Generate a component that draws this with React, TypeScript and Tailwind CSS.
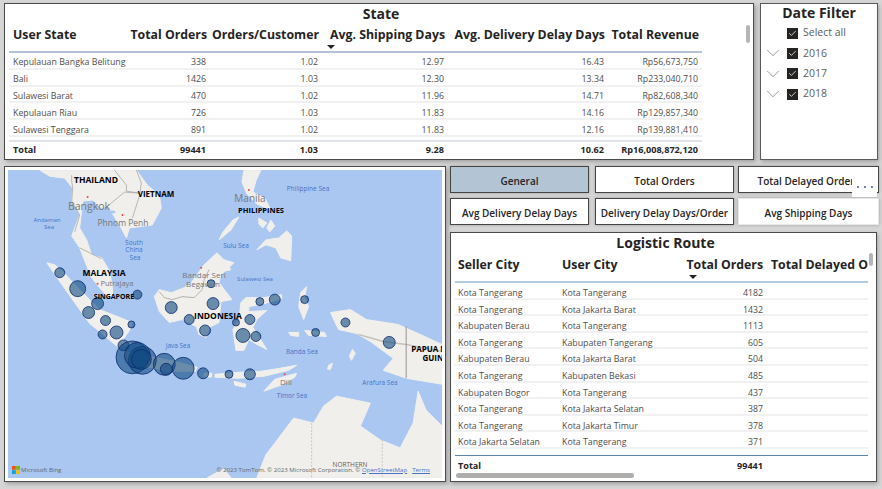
import React from 'react';
import { ChevronDown, Check } from 'lucide-react';

const stateRows = [
  ['Kepulauan Bangka Belitung', '338', '1.02', '12.97', '16.43', 'Rp56,673,750'],
  ['Bali', '1426', '1.03', '12.30', '13.34', 'Rp233,040,710'],
  ['Sulawesi Barat', '470', '1.02', '11.96', '14.71', 'Rp82,608,340'],
  ['Kepulauan Riau', '726', '1.03', '11.83', '14.16', 'Rp129,857,340'],
  ['Sulawesi Tenggara', '891', '1.02', '11.83', '12.16', 'Rp139,881,410'],
];

const routeRows = [
  ['Kota Tangerang', 'Kota Tangerang', '4182'],
  ['Kota Tangerang', 'Kota Jakarta Barat', '1432'],
  ['Kabupaten Berau', 'Kota Tangerang', '1113'],
  ['Kota Tangerang', 'Kabupaten Tangerang', '605'],
  ['Kabupaten Berau', 'Kota Jakarta Barat', '504'],
  ['Kota Tangerang', 'Kabupaten Bekasi', '485'],
  ['Kabupaten Bogor', 'Kota Tangerang', '437'],
  ['Kota Tangerang', 'Kota Jakarta Selatan', '387'],
  ['Kota Tangerang', 'Kota Jakarta Timur', '378'],
  ['Kota Jakarta Selatan', 'Kota Tangerang', '371'],
  ['Kota Tangerang', 'Kota Jakarta Utara', '334'],
];

const bubbles = [
  [60, 273, 5], [78, 289, 8], [98, 304, 6], [89, 313, 6], [106, 321, 5], [138, 295, 4.5],
  [132, 325, 3.5], [172, 308, 6], [214, 304, 6], [212, 284, 4], [190, 320, 5], [261, 302, 4],
  [276, 300, 5.5], [306, 300, 4], [251, 320, 5], [237, 323, 3.5], [347, 323, 4.5], [103, 335, 4.5],
  [117, 333, 6.5], [206, 331, 5.5], [124, 346, 5.5], [133, 358, 16.5], [143, 361, 14],
  [138, 356, 13], [142, 360, 10], [165, 365, 11], [167, 370, 6], [184, 369, 11], [204, 374, 5.5],
  [244, 336, 7], [257, 337, 5], [230, 375, 4], [251, 375, 5.5], [317, 333, 4], [391, 343, 6],
];

const land = [
  // indochina and malay peninsula
  '40,170 50,176 65,178 73,188 72,201 80,215 72,236 80,248 85,261 92,278 100,288 108,297 113,297 113,288 110,271 102,258 92,255 87,240 80,228 82,211 83,201 93,200 102,208 108,206 120,225 127,238 130,228 153,225 162,208 160,195 148,185 137,170',
  // sumatra
  '47,263 55,265 63,272 80,290 100,310 133,323 130,331 123,341 132,344 120,349 100,332 90,324 70,296',
  // java and the lesser sunda islands
  '124,352 150,357 175,362 198,368 196,372 170,372 145,367 128,360',
  '205,374 213,374 212,378 205,377',
  '216,375 240,373 262,372 275,370 298,366 290,371 265,377 240,379 216,378',
  '235,382 247,385 246,388 236,386',
  '265,392 276,380 298,374 296,378 282,386',
  // borneo
  '155,297 160,290 172,293 185,288 192,283 200,272 205,265 218,253 225,260 235,263 222,275 220,283 233,300 222,302 220,323 210,328 207,338 200,335 197,327 183,320 170,323 160,312',
  // sulawesi
  '247,298 265,298 283,295 283,299 262,305 250,307 250,312 268,311 258,320 254,328 268,350 258,345 250,340 245,351 237,351 234,330 240,320 242,303',
  '290,333 300,333 300,337 292,336',
  '306,331 326,333 328,337 310,336',
  '308,287 302,293 300,307 305,320 310,307 306,298',
  // papua
  '332,313 352,310 368,320 400,325 444,345 444,385 408,379 385,371 395,359 372,342 358,334 340,330',
  '354,350 357,354 353,361 351,357',
  '330,366 334,364 332,370 329,370',
  // australia
  '258,479 267,456 295,419 315,424 325,407 338,397 372,404 362,427 382,441 402,449 415,424 420,392 428,411 444,427 444,479',
  '208,479 225,470 232,479',
  // philippines
  '245,170 262,170 257,181 254,192 266,198 272,210 258,204 248,194 243,182',
  '240,217 232,230 220,240 224,232 234,220',
  '260,218 268,223 264,228 260,224',
  '272,220 276,226 271,232 268,228',
  '258,250 267,240 280,238 288,231 293,236 292,261 282,258 277,248 267,245',
  '220,266 226,262 232,270 222,272',
];

const labels: [string, number, number, string][] = [
  ['THAILAND', 96, 180, 'text-[8.5px] font-bold text-black'],
  ['VIETNAM', 156, 194, 'text-[8px] font-bold text-black'],
  ['Bangkok', 89, 206, 'text-[10.5px] text-[#777777]'],
  ['Phnom Penh', 123, 223, 'text-[8.5px] text-[#777777]'],
  ['Andaman', 47, 220, 'text-[6px] text-[#4a72c8]'],
  ['Sea', 49, 227, 'text-[6px] text-[#4a72c8]'],
  ['South', 134, 243, 'text-[6.5px] text-[#4a72c8]'],
  ['China', 134, 250, 'text-[6.5px] text-[#4a72c8]'],
  ['Sea', 135, 258, 'text-[6.5px] text-[#4a72c8]'],
  ['MALAYSIA', 104, 273, 'text-[8.5px] font-bold text-black'],
  ['Putrajaya', 117, 284, 'text-[7.5px] text-[#777777]'],
  ['SINGAPORE', 114, 296, 'text-[7px] font-bold text-black'],
  ['Bandar Seri', 204, 275, 'text-[8px] text-[#777777]'],
  ['Begawan', 203, 284, 'text-[8px] text-[#777777]'],
  ['INDONESIA', 218, 316, 'text-[8.5px] font-bold text-black'],
  ['Manila', 250, 198, 'text-[10px] text-[#777777]'],
  ['PHILIPPINES', 261, 211, 'text-[7.5px] font-bold text-black'],
  ['Philippine Sea', 308, 189, 'text-[6.5px] text-[#4a72c8]'],
  ['Sulu Sea', 236, 246, 'text-[6.5px] text-[#4a72c8]'],
  ['Sulawesi Sea', 255, 279, 'text-[6px] text-[#4a72c8]'],
  ['Java Sea', 178, 346, 'text-[6.5px] text-[#4a72c8]'],
  ['Banda Sea', 302, 352, 'text-[6.5px] text-[#4a72c8]'],
  ['Arafura Sea', 380, 383, 'text-[6.5px] text-[#4a72c8]'],
  ['Timor Sea', 292, 396, 'text-[6.5px] text-[#4a72c8]'],
  ['Dili', 286, 382, 'text-[8px] text-[#777777]'],
  ['PAPUA N', 429, 349, 'text-[8px] font-bold text-black'],
  ['GUIN', 433, 358, 'text-[8px] font-bold text-black'],
  ['NORTHERN', 350, 465, 'text-[6.5px] text-[#6b5a50]'],
];

const redDots = [[88, 197], [123, 215], [98, 284], [202, 268], [250, 190], [286, 375]];

const TopCell = ({ value, index, bold }: { value: string; index: number; bold?: boolean }) => (
  <div className={`${index === 0 ? 'pl-[4px] text-left' : 'pr-[4px] text-right'} ${bold ? 'font-bold text-[#252423]' : ''} truncate`}>
    {value}
  </div>
);

const FilterItem = ({ label, chevron }: { label: string; chevron?: boolean }) => (
  <div className="flex items-center h-[20.3px]">
    <div className="w-[26px] flex justify-center pr-[2px]">
      {chevron && <ChevronDown size={22} strokeWidth={0.7} className="text-[#666666] shrink-0" />}
    </div>
    <div className="w-[11px] h-[11px] bg-[#252423] flex items-center justify-center">
      <Check size={9} strokeWidth={2} className="text-white" />
    </div>
    <span className="ml-[5px] text-[10.5px] text-[#605e5c]">{label}</span>
  </div>
);

const TabButton = ({ label, active, plain }: { label: string; active?: boolean; plain?: boolean }) => (
  <div
    className={`h-[27px] pt-[3px] flex items-center justify-center overflow-hidden whitespace-nowrap text-[10px] font-semibold text-[#252423] shadow-[0_0_3px_rgba(0,0,0,0.25)] ${
      active ? 'bg-[#b3c4d5] border border-[#444444]' : plain ? 'bg-white border border-[#e8e8e8]' : 'bg-white border border-[#444444]'
    }`}
  >
    {label}
  </div>
);

const MapView = () => (
  <div className="relative h-full w-full overflow-hidden bg-[#a9c7f1]">
    <svg viewBox="8 170 436 309" className="absolute inset-0 w-full h-full">
      <g className="blur-[0.4px]">
        {land.map((points, i) => (
          <polygon key={i} points={points} fill="#f1efeb" stroke="#f1efeb" strokeWidth="1" strokeLinejoin="round" />
        ))}
        <polyline points="72,175 72,181 73,188 72,201 80,215 75,232" fill="none" stroke="#a8a8a2" strokeWidth="0.8" />
        <polyline points="115,170 127,185 127,191 140,193 125,192 107,207" fill="none" stroke="#a8a8a2" strokeWidth="0.8" />
        <polyline points="137,170 142,183 140,196 133,218" fill="none" stroke="#a8a8a2" strokeWidth="0.8" />
        <polyline points="80,248 92,254 102,259" fill="none" stroke="#a8a8a2" strokeWidth="0.8" />
        <polyline points="160,292 165,298 173,300 183,297 195,298 203,290 205,280 210,270" fill="none" stroke="#a0a09a" strokeWidth="0.8" />
        <polyline points="360,335 385,342 408,345 444,352" fill="none" stroke="#c4c2bc" strokeWidth="1.5" />
        <line x1="313" y1="424" x2="313" y2="479" stroke="#a0a0a0" strokeWidth="0.5" strokeDasharray="2 1.5" />
        <line x1="384" y1="441" x2="384" y2="479" stroke="#a0a0a0" strokeWidth="0.5" strokeDasharray="2 1.5" />
        <ellipse cx="112" cy="212" rx="4" ry="1.5" fill="#a9c7f1" />
      </g>
      <line x1="408" y1="327" x2="408" y2="379" stroke="#808080" strokeWidth="0.8" />
      {redDots.map(([x, y]) => (
        <circle key={`${x}-${y}`} cx={x} cy={y} r="1" fill="#f0483e" />
      ))}
      {bubbles.map(([x, y, r]) => (
        <circle key={`${x}-${y}`} cx={x} cy={y} r={r} fill="#0f4a80" fillOpacity="0.6" stroke="#0c2a6b" strokeWidth="0.8" />
      ))}
    </svg>
    {labels.map(([text, x, y, cls]) => (
      <span
        key={`${text}-${x}`}
        className={`absolute -translate-x-1/2 -translate-y-1/2 whitespace-nowrap leading-none ${cls}`}
        style={{ left: x - 8, top: y - 170 }}
      >
        {text}
      </span>
    ))}
    <div className="absolute left-[4px] bottom-[4px] flex items-center gap-[1px]">
      <svg viewBox="0 0 8 8" className="w-[8px] h-[8px]">
        <rect x="0" y="0" width="3.8" height="3.8" fill="#f25022" />
        <rect x="4.2" y="0" width="3.8" height="3.8" fill="#7fba00" />
        <rect x="0" y="4.2" width="3.8" height="3.8" fill="#00a4ef" />
        <rect x="4.2" y="4.2" width="3.8" height="3.8" fill="#ffb900" />
      </svg>
      <span className="text-[6px] leading-none text-[#666666]">Microsoft Bing</span>
    </div>
    <div className="absolute right-[12px] bottom-[5px] flex gap-[5px] whitespace-nowrap text-[6.1px] leading-none text-[#666666]">
      <span>© 2023 TomTom, © 2023 Microsoft Corporation, © <span className="underline text-[#4a72c8]">OpenStreetMap</span></span>
      <span className="underline text-[#4a72c8]">Terms</span>
    </div>
  </div>
);

export default function App() {
  return (
    <div className="w-[882px] h-[489px] overflow-hidden bg-[#d6d6d6] pl-[4px] pt-[3px] font-['Open_Sans',sans-serif]">
      <div className="flex gap-[6px] h-[157px]">
        {/* State table */}
        <div className="relative w-[750px] bg-white border border-[#4a4a4a] shadow-[2px_2px_4px_rgba(0,0,0,0.25)] pl-[4px]">
          <div className="h-[19px] flex items-center justify-center text-[14px] font-bold text-[#252423]">State</div>
          <div className="w-[693px] grid grid-cols-[120px_81px_112px_126px_160px_94px] h-[30px] pb-[4px] items-center border-b-2 border-[#b3c4d8] text-[12.3px] font-bold text-[#252423] whitespace-nowrap">
            <div className="pl-[4px]">User State</div>
            <div className="pr-[3px] text-right">Total Orders</div>
            <div className="pr-[3px] text-right">Orders/Customer</div>
            <div className="relative h-full flex items-center justify-end pr-[3px]">
              Avg. Shipping Days
              <div className="absolute left-[5px] bottom-[-2px] w-0 h-0 border-x-[4px] border-x-transparent border-t-[4px] border-t-[#252423]" />
            </div>
            <div className="pr-[3px] text-right">Avg. Delivery Delay Days</div>
            <div className="pr-[3px] text-right">Total Revenue</div>
          </div>
          <div className="w-[693px] text-[8.8px] text-[#4f4d4b]">
            {stateRows.map((row) => (
              <div key={row[0]} className="grid grid-cols-[120px_81px_112px_126px_160px_94px] items-center h-[16.8px] pt-[5px] border-b-2 border-[#f1f1f1]">
                {row.map((value, i) => (
                  <TopCell key={i} value={value} index={i} />
                ))}
              </div>
            ))}
            <div className="mt-[3px] grid grid-cols-[120px_81px_112px_126px_160px_94px] items-center h-[17px] pt-[1px] border-t-2 border-[#dfe3e8] text-[9.1px]">
              {['Total', '99441', '1.03', '9.28', '10.62', 'Rp16,008,872,120'].map((value, i) => (
                <TopCell key={i} value={value} index={i} bold />
              ))}
            </div>
          </div>
          <div className="absolute right-[3px] top-[21px] w-[4px] h-[18px] rounded-full bg-[#b5b5b5]" />
        </div>

        {/* Date filter */}
        <div className="w-[118px] bg-white border border-[#5a5a5a] shadow-[1px_2px_4px_rgba(0,0,0,0.25)]">
          <div className="h-[17px] flex items-center justify-center text-[14px] font-bold text-[#252423]">Date Filter</div>
          <div className="mt-[2px]">
            <FilterItem label="Select all" />
            <FilterItem label="2016" chevron />
            <FilterItem label="2017" chevron />
            <FilterItem label="2018" chevron />
          </div>
        </div>
      </div>

      <div className="mt-[6px] flex gap-[4px] h-[316px]">
        {/* Map */}
        <div className="w-[442px] bg-white border border-[#4a4a4a] p-[3px] shadow-[2px_2px_4px_rgba(0,0,0,0.25)]">
          <MapView />
        </div>

        <div className="w-[427px] flex flex-col">
          <div className="relative grid grid-cols-[139px_139px_139px] gap-x-[6px] gap-y-[5px]">
            <TabButton label="General" active />
            <TabButton label="Total Orders" />
            <div className="-ml-[2px]">
              <TabButton label="Total Delayed Orders" />
            </div>
            <TabButton label="Avg Delivery Delay Days" />
            <TabButton label="Delivery Delay Days/Order" />
            <div className="-ml-[2px]">
              <TabButton label="Avg Shipping Days" plain />
            </div>
            <div className="absolute right-[0px] top-[10px] w-[25px] h-[21px] bg-white flex items-center justify-center gap-[5px] pl-[1px]">
              <div className="w-[2px] h-[2px] bg-[#6f86a8]" />
              <div className="w-[2px] h-[2px] bg-[#6f86a8]" />
              <div className="w-[2px] h-[2px] bg-[#6f86a8]" />
            </div>
          </div>

          {/* Logistic route */}
          <div className="relative mt-[7px] flex-1 bg-white border border-[#4a4a4a] pl-[4px] shadow-[1px_2px_4px_rgba(0,0,0,0.25)] overflow-hidden">
            <div className="h-[18px] flex items-center justify-center text-[14px] font-bold text-[#252423]">Logistic Route</div>
            <div className="w-[413px] grid grid-cols-[104px_126px_81px_102px] h-[32px] pb-[2px] items-center border-b-2 border-[#b3cbe3] text-[12.3px] font-bold text-[#252423] whitespace-nowrap">
              <div className="pl-[3px]">Seller City</div>
              <div className="pl-[3px]">User City</div>
              <div className="relative h-full flex items-center justify-end pr-[3px]">
                Total Orders
                <div className="absolute left-[4px] bottom-[0px] w-0 h-0 border-x-[4px] border-x-transparent border-t-[4px] border-t-[#252423]" />
              </div>
              <div className="pl-[5px] overflow-hidden">Total Delayed Orders</div>
            </div>
            <div className="w-[413px] h-[172px] overflow-hidden text-[8.8px] text-[#4f4d4b]">
              {routeRows.map((row, i) => (
                <div key={i} className="grid grid-cols-[104px_126px_81px_102px] items-center h-[16.6px] pt-[4px] border-b-2 border-[#f1f1f1]">
                  <div className="pl-[3px] truncate">{row[0]}</div>
                  <div className="pl-[3px] truncate">{row[1]}</div>
                  <div className="pr-[3px] text-right">{row[2]}</div>
                  <div />
                </div>
              ))}
            </div>
            <div className="w-[413px] grid grid-cols-[104px_126px_81px_102px] items-center h-[18px] pt-[2px] border-t border-[#5b86b0] text-[9.1px] font-bold text-[#252423]">
              <div className="pl-[3px]">Total</div>
              <div />
              <div className="pr-[3px] text-right">99441</div>
              <div />
            </div>
            <div className="ml-[1px] w-[178px] h-[5px] rounded-full bg-[#b0aeac]" />
            <div className="absolute right-[3px] top-[20px] w-[4px] h-[13px] rounded-full bg-[#b5b5b5]" />
          </div>
        </div>
      </div>
    </div>
  );
}
